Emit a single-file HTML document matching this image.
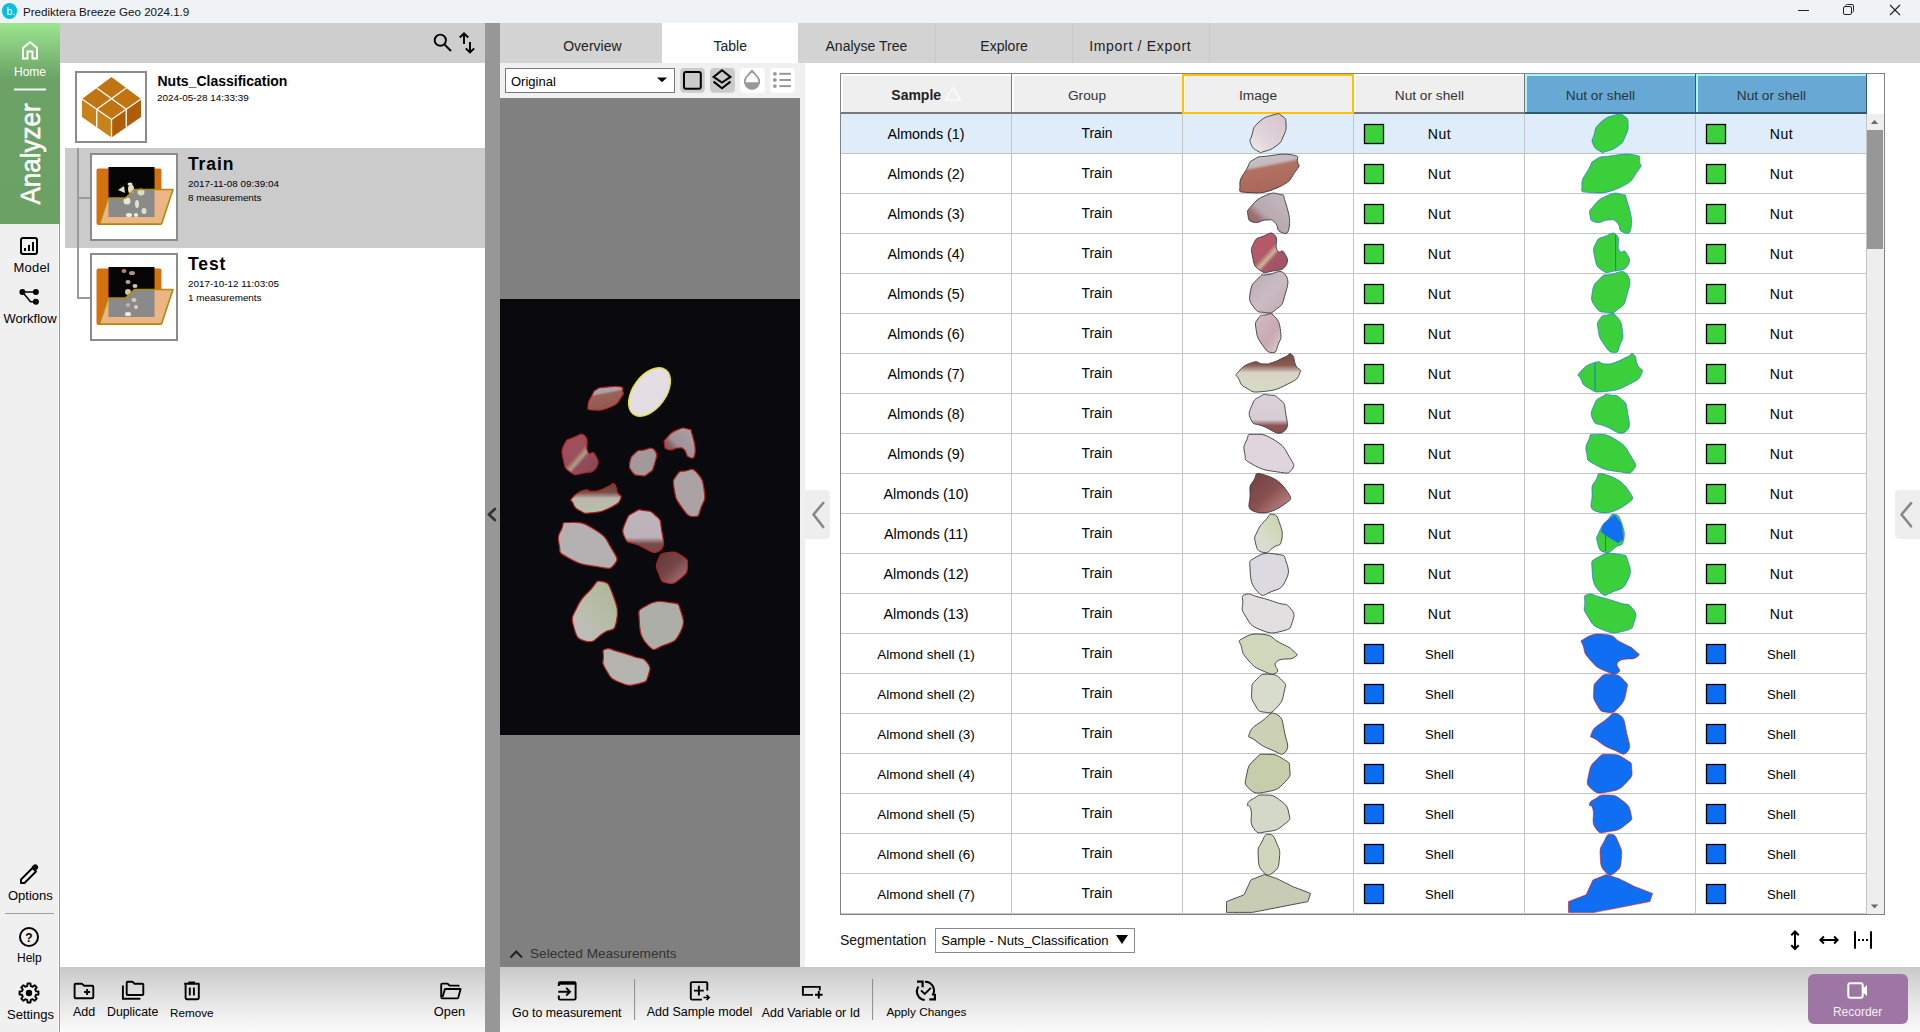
<!DOCTYPE html><html><head><meta charset="utf-8"><title>Prediktera Breeze Geo</title><style>*{margin:0;padding:0;box-sizing:border-box}
html,body{width:1920px;height:1032px;overflow:hidden;background:#fff;font-family:"Liberation Sans",sans-serif;color:#000;position:relative}
.abs{position:absolute}
.t{position:absolute;white-space:nowrap;line-height:1}
</style></head><body>
<div class="abs" style="left:0;top:0;width:1920px;height:23px;background:#eff3f6"></div>
<div class="abs" style="left:2px;top:3.2px;width:15.4px;height:15.4px;border-radius:50%;background:#06bedf"></div>
<div class="t" style="left:6.5px;top:5.5px;font-size:10.5px;color:#fff">b.</div>
<div class="t" style="left:23px;top:5.8px;font-size:11.6px;color:#111">Prediktera Breeze Geo 2024.1.9</div>
<svg class="abs" style="left:1790px;top:0" width="130" height="23">
 <line x1="8" y1="10.5" x2="19" y2="10.5" stroke="#222" stroke-width="1"/>
 <rect x="53.5" y="6.5" width="8" height="8" rx="1.5" fill="none" stroke="#222" stroke-width="1"/>
 <path d="M55.5 5.5 Q56 4.5 57.5 4.5 L62 4.5 Q63.5 4.5 63.5 6 L63.5 10.5 Q63.5 12 62.5 12.5" fill="none" stroke="#222" stroke-width="1"/>
 <line x1="100" y1="5" x2="110" y2="15" stroke="#222" stroke-width="1.1"/>
 <line x1="110" y1="5" x2="100" y2="15" stroke="#222" stroke-width="1.1"/>
</svg>

<div class="abs" style="left:0;top:23px;width:60px;height:1009px;background:#f0f0f0"></div>
<div class="abs" style="left:58px;top:224px;width:1px;height:808px;background:#fafafa"></div><div class="abs" style="left:59px;top:224px;width:1px;height:808px;background:#9a9a9a"></div>
<div class="abs" style="left:0;top:23px;width:60px;height:201px;background:linear-gradient(#9ce58f 0px,#6ca266 56px,#6ba165 201px)"></div>
<svg class="abs" style="left:0;top:23px" width="59" height="201">
 <path d="M23 35.5 L23 25 L30 19 L37 25 L37 35.5 L32.5 35.5 L32.5 28.5 L27.5 28.5 L27.5 35.5 Z" fill="none" stroke="#fff" stroke-width="2"/>
 <rect x="14" y="65.5" width="32" height="2" fill="#fff" opacity="0.95"/>
</svg>
<div class="t" style="left:14px;top:66px;font-size:12px;color:#fff">Home</div>
<div class="t" style="left:0;top:0;font-size:26px;color:#fff;-webkit-text-stroke:0.5px #fff;transform-origin:0 0;transform:translate(16.5px,204.5px) rotate(-90deg) scale(1,1.08)">Analyzer</div>
<svg class="abs" style="left:0;top:224px" width="59" height="120">
 <rect x="21" y="14" width="16" height="16" rx="2" fill="none" stroke="#000" stroke-width="2"/>
 <rect x="24" y="24" width="2" height="3" fill="#000"/>
 <rect x="28" y="21" width="2" height="6" fill="#000"/>
 <rect x="32" y="18" width="2" height="9" fill="#000"/>
 <path d="M22.5 68 L36 68 M22.5 68 L30.5 77.8 L36 77.8" fill="none" stroke="#000" stroke-width="1.5"/>
 <circle cx="22.4" cy="68" r="3" fill="#000"/>
 <circle cx="35.9" cy="68" r="3" fill="#000"/>
 <circle cx="35.9" cy="77.8" r="3" fill="#000"/>
</svg>
<div class="t" style="left:13.5px;top:261px;font-size:13px;letter-spacing:0.2px">Model</div>
<div class="t" style="left:3.5px;top:311.5px;font-size:13px">Workflow</div>
<svg class="abs" style="left:0;top:855px" width="59" height="177">
 <path d="M21 24.5 L32.5 13 L36 16.5 L24.5 28 L21 28 Z" fill="none" stroke="#000" stroke-width="1.9" stroke-linejoin="round"/><path d="M33 10.5 Q34.5 8.5 36.5 9.5 L38 11 Q39 13 37 14.5 L35.5 16 L31.5 12 Z" fill="#000"/>
 <line x1="5" y1="58.5" x2="54" y2="58.5" stroke="#a0a0a0" stroke-width="1"/>
 <circle cx="29" cy="82" r="9" fill="none" stroke="#000" stroke-width="2"/>
 <text x="29" y="86.5" font-size="12" font-family="Liberation Sans" font-weight="bold" text-anchor="middle">?</text>
</svg>
<div class="t" style="left:8px;top:889px;font-size:13px">Options</div>
<div class="t" style="left:17px;top:952px;font-size:12px">Help</div>
<svg class="abs" style="left:17px;top:981px" width="24" height="24" viewBox="0 0 24 24">
 <path d="M18.97,10.21 L21.48,10.50 L21.48,13.50 L18.97,13.79 L18.20,15.67 L19.77,17.64 L17.64,19.77 L15.67,18.20 L13.79,18.97 L13.50,21.48 L10.50,21.48 L10.21,18.97 L8.33,18.20 L6.36,19.77 L4.23,17.64 L5.80,15.67 L5.03,13.79 L2.52,13.50 L2.52,10.50 L5.03,10.21 L5.80,8.33 L4.23,6.36 L6.36,4.23 L8.33,5.80 L10.21,5.03 L10.50,2.52 L13.50,2.52 L13.79,5.03 L15.67,5.80 L17.64,4.23 L19.77,6.36 L18.20,8.33Z" fill="none" stroke="#000" stroke-width="1.9" stroke-linejoin="round"/>
 <circle cx="12" cy="12" r="3.2" fill="#000"/>
</svg>
<div class="t" style="left:7px;top:1008px;font-size:13px">Settings</div>

<div class="abs" style="left:60px;top:23px;width:425px;height:40px;background:#cecece;"></div>
<div class="abs" style="left:60px;top:63px;width:425px;height:904px;background:#fff;"></div>
<div class="abs" style="left:485px;top:23px;width:15px;height:1009px;background:#979797;"></div>
<svg class="abs" style="left:420px;top:23px" width="65" height="40">
<circle cx="20.3" cy="17.2" r="5.6" fill="none" stroke="#000" stroke-width="1.9"/>
<line x1="24.5" y1="21.5" x2="31" y2="28" stroke="#000" stroke-width="1.9"/>
<path d="M44 10.5 L44 21 M39.8 14.5 L44 10.3 L48.2 14.5" fill="none" stroke="#000" stroke-width="1.9"/>
<path d="M50 19 L50 29.5 M45.8 25.3 L50 29.5 L54.2 25.3" fill="none" stroke="#000" stroke-width="1.9"/>
</svg>
<div class="abs" style="left:75px;top:71px;width:72px;height:72px;background:#fff;border:2px solid #8b8b8b"></div>
<svg class="abs" style="left:0;top:0" width="160" height="150">
<polygon points="111.5,77 141,99 111.5,119.5 82,99" fill="#c07412"/>
<polygon points="82,99 111.5,119.5 111.5,137.5 82,117" fill="#c98119"/>
<polygon points="111.5,119.5 141,99 141,117 111.5,137.5" fill="#b05c09"/>
<g stroke="#fff" stroke-width="1.3" fill="none">
<line x1="96.75" y1="88" x2="126.25" y2="109.25"/>
<line x1="126.25" y1="88" x2="96.75" y2="109.25"/>
<line x1="96.75" y1="109.25" x2="96.75" y2="127.5"/>
<line x1="126.25" y1="109.25" x2="126.25" y2="127.5"/>
<line x1="111.5" y1="119.5" x2="111.5" y2="137.5"/>
<polyline points="82,99 111.5,119.5 141,99"/>
</g></svg>
<div class="t" style="left:157.5px;top:73.65px;font-size:14px;font-weight:bold;color:#000;">Nuts_Classification</div>
<div class="t" style="left:157px;top:93.42px;font-size:9.9px;font-weight:normal;color:#000;">2024-05-28 14:33:39</div>
<div class="abs" style="left:65px;top:148px;width:420px;height:100px;background:#cbcbcb;"></div>
<div class="abs" style="left:77px;top:148px;width:2px;height:150px;background:#9a9a9a;"></div>
<div class="abs" style="left:77px;top:197px;width:13px;height:2px;background:#9a9a9a;"></div>
<div class="abs" style="left:77px;top:297px;width:13px;height:2px;background:#9a9a9a;"></div>
<div class="abs" style="left:90px;top:153px;width:88px;height:88px;background:#fff;border:2px solid #8b8b8b"></div><svg class="abs" style="left:0;top:0px" width="200" height="350">
<rect x="96.5" y="168.5" width="65" height="56.5" rx="2" fill="#d4700e"/>
<rect x="108.5" y="167" width="46" height="50" fill="#050505"/>
<polygon points="99.5,224 108,198 125.5,198 134.5,189.5 173,189.5 161.5,224" fill="#ebb584"/>
<polygon points="108.5,198 125.5,198 134.5,189.5 154.5,189.5 154.5,217 108.5,217" fill="#8a8a8a"/>
<ellipse cx="130" cy="184" rx="2.5" ry="1.5" fill="#e8e8d0"/>
<polygon points="118,190 124,186 125,193" fill="#e0e0c8"/>
<ellipse cx="131" cy="189" rx="3" ry="4.5" fill="#dcdcc0"/>
<ellipse cx="141" cy="192" rx="3.5" ry="3.5" fill="#dcdcc0"/>
<ellipse cx="127" cy="201" rx="3.5" ry="3.5" fill="#e8e8d8"/>
<ellipse cx="137" cy="204" rx="2" ry="4" fill="#e0e0c8"/>
<ellipse cx="144" cy="211" rx="2.5" ry="3" fill="#e0e0c8"/>
<ellipse cx="129" cy="215" rx="3" ry="2" fill="#f0f0e0"/>
<ellipse cx="136" cy="215" rx="2" ry="2" fill="#f0f0e0"/>
<polygon points="99.5,224 108,198 125.5,198 134.5,189.5 173,189.5 161.5,224" fill="none" stroke="#b08a0c" stroke-width="1.6" stroke-linejoin="round"/>
</svg>
<div class="abs" style="left:90px;top:253px;width:88px;height:88px;background:#fff;border:2px solid #8b8b8b"></div><svg class="abs" style="left:0;top:0px" width="200" height="350">
<rect x="96.5" y="268.5" width="65" height="56.5" rx="2" fill="#d4700e"/>
<rect x="108.5" y="267" width="46" height="50" fill="#050505"/>
<polygon points="99.5,324 108,298 125.5,298 134.5,289.5 173,289.5 161.5,324" fill="#ebb584"/>
<polygon points="108.5,298 125.5,298 134.5,289.5 154.5,289.5 154.5,317 108.5,317" fill="#8a8a8a"/>
<ellipse cx="124" cy="271" rx="2.5" ry="2" fill="#b08070"/>
<ellipse cx="132" cy="273" rx="3" ry="2" fill="#c09080"/>
<ellipse cx="128" cy="282" rx="2.5" ry="2" fill="#c0a090"/>
<ellipse cx="135" cy="286" rx="2.5" ry="2" fill="#c8c8a8"/>
<ellipse cx="128" cy="292" rx="3" ry="3" fill="#c8c8a8"/>
<ellipse cx="134" cy="300" rx="2.5" ry="2" fill="#d8c8c0"/>
<ellipse cx="128" cy="305" rx="2" ry="2" fill="#d0b0b0"/>
<ellipse cx="136" cy="307" rx="2" ry="2" fill="#e0d0c8"/>
<ellipse cx="128" cy="314" rx="3" ry="2" fill="#f0f0e8"/>
<polygon points="99.5,324 108,298 125.5,298 134.5,289.5 173,289.5 161.5,324" fill="none" stroke="#b08a0c" stroke-width="1.6" stroke-linejoin="round"/>
</svg>
<div class="t" style="left:188px;top:155.69px;font-size:17.5px;font-weight:bold;color:#000;letter-spacing:0.9px">Train</div>
<div class="t" style="left:188px;top:178.62px;font-size:9.9px;font-weight:normal;color:#000;">2017-11-08 09:39:04</div>
<div class="t" style="left:188px;top:192.62px;font-size:9.9px;font-weight:normal;color:#000;">8 measurements</div>
<div class="t" style="left:188px;top:255.69px;font-size:17.5px;font-weight:bold;color:#000;letter-spacing:0.9px">Test</div>
<div class="t" style="left:188px;top:278.62px;font-size:9.9px;font-weight:normal;color:#000;">2017-10-12 11:03:05</div>
<div class="t" style="left:188px;top:292.62px;font-size:9.9px;font-weight:normal;color:#000;">1 measurements</div>
<div class="abs" style="left:500px;top:23px;width:1420px;height:40px;background:#d3d3d3;"></div>
<div class="abs" style="left:662px;top:23px;width:136px;height:40px;background:#fff;"></div>
<div class="abs" style="left:935px;top:23px;width:1px;height:40px;background:#c9c9c9;"></div>
<div class="abs" style="left:1072px;top:23px;width:1px;height:40px;background:#c9c9c9;"></div>
<div class="abs" style="left:1209px;top:23px;width:1px;height:40px;background:#c9c9c9;"></div>
<div class="t" style="left:392.4px;width:400px;text-align:center;top:39.35px;font-size:14px;font-weight:normal;color:#222;">Overview</div>
<div class="t" style="left:530.2px;width:400px;text-align:center;top:39.35px;font-size:14px;font-weight:normal;color:#222;">Table</div>
<div class="t" style="left:666.4px;width:400px;text-align:center;top:39.35px;font-size:14px;font-weight:normal;color:#222;">Analyse Tree</div>
<div class="t" style="left:804.1px;width:400px;text-align:center;top:39.35px;font-size:14px;font-weight:normal;color:#222;">Explore</div>
<div class="t" style="left:940.3px;width:400px;text-align:center;top:39.35px;font-size:14px;font-weight:normal;color:#222;letter-spacing:0.7px">Import / Export</div>
<div class="abs" style="left:500px;top:63px;width:305px;height:35px;background:#f0f0f0;"></div>
<div class="abs" style="left:800px;top:98px;width:5px;height:869px;background:#f0f0f0;"></div>
<div class="abs" style="left:500px;top:98px;width:300px;height:869px;background:#808080;"></div>
<div class="abs" style="left:505px;top:68px;width:170px;height:25px;background:#fff;border:1px solid #7a7a7a"></div>
<div class="t" style="left:511px;top:74.70px;font-size:13px;font-weight:normal;color:#000;">Original</div>
<svg class="abs" style="left:650px;top:70px" width="25" height="20"><polygon points="7,7.4 17,7.4 12,12.2" fill="#000"/></svg>
<svg class="abs" style="left:675px;top:63px" width="130" height="36">
<rect x="5.3" y="5.1" width="24.5" height="24.7" rx="4" fill="#cacaca"/>
<rect x="9" y="9" width="16.8" height="16.8" rx="2" fill="none" stroke="#000" stroke-width="2"/>
<rect x="35" y="5.1" width="24.9" height="24.7" rx="4" fill="#cacaca"/>
<polygon points="47,7.3 55.5,13.9 47,19.6 38.6,13.9" fill="none" stroke="#000" stroke-width="2" stroke-linejoin="miter"/>
<polyline points="38.6,18.6 47,25.3 55.5,18.6" fill="none" stroke="#000" stroke-width="2"/>
<rect x="65" y="5.1" width="24.7" height="24.7" rx="4" fill="#fff"/>
<path d="M77 7.6 L71 14.5 A7.2 7.2 0 1 0 83 14.5 Z" fill="none" stroke="#999" stroke-width="1.8" stroke-linejoin="round"/>
<path d="M69.6 19.3 L84.4 19.3 A7.4 7.4 0 0 1 69.6 19.3 Z" fill="#999"/>
<rect x="95.1" y="5.1" width="24.7" height="24.7" rx="4" fill="#fff"/>
<g fill="#999"><circle cx="99.9" cy="10.8" r="1.9"/><circle cx="99.9" cy="17" r="1.9"/><circle cx="99.9" cy="23.1" r="1.9"/></g>
<g stroke="#999" stroke-width="2"><line x1="104.3" y1="10.8" x2="115.9" y2="10.8"/><line x1="104.3" y1="17" x2="115.9" y2="17"/><line x1="104.3" y1="23.1" x2="115.9" y2="23.1"/></g>
</svg>
<div class="abs" style="left:500px;top:299px;width:299.5px;height:436px;background:#09090e;"></div>
<svg class="abs" style="left:0;top:0" width="800" height="740"><ellipse cx="649.5" cy="392" rx="16.5" ry="27.5" transform="rotate(36 649.5 392)" fill="#e4dde3" stroke="#e6e41e" stroke-width="1.2"/><path d="M596.3,389.6 C600.1,387.2 597.8,388.2 604.8,387.4 C611.7,386.5 614.1,385.6 619.4,386.7 C624.8,387.8 622.0,388.0 622.6,391.0 C623.2,394.0 625.0,392.0 621.5,396.7 C618.0,401.5 619.6,402.9 611.0,406.8 C602.4,410.8 599.8,410.4 592.9,410.0 C586.0,409.6 588.2,409.8 588.0,405.4 C587.8,401.0 589.6,400.1 592.1,395.3 C594.6,390.6 592.6,391.9 596.3,389.6Z" fill="url(#ig1)" fill-opacity="0.86" stroke="#b02020" stroke-width="1.2"/><path d="M687.7,429.0 C692.1,430.3 689.9,426.9 692.0,434.2 C694.2,441.5 696.0,446.4 695.0,453.2 C694.0,460.1 691.9,458.0 688.6,457.0 C685.4,456.0 687.4,452.4 684.3,449.7 C681.2,447.0 682.9,448.0 678.3,448.0 C673.6,448.0 672.9,450.8 668.8,449.7 C664.7,448.7 665.0,448.2 664.5,444.5 C664.0,440.9 663.2,442.0 667.1,437.6 C671.0,433.2 671.2,432.5 677.4,429.9 C683.6,427.3 683.3,427.7 687.7,429.0Z" fill="url(#ig2)" fill-opacity="0.86" stroke="#b02020" stroke-width="1.2"/><path d="M585.3,436.3 C589.5,440.6 584.9,446.4 587.7,451.8 C590.5,457.1 591.9,449.5 594.6,454.1 C597.2,458.8 600.0,461.5 596.5,467.3 C593.0,473.0 590.9,471.8 583.0,473.2 C575.0,474.6 576.0,476.3 570.1,472.1 C564.2,467.8 564.9,467.2 563.2,459.0 C561.5,450.7 561.2,451.0 564.3,444.6 C567.4,438.2 567.3,440.0 573.6,437.5 C579.9,435.0 581.1,432.0 585.3,436.3Z" fill="url(#ig3)" fill-opacity="0.86" stroke="#b02020" stroke-width="1.2"/><path d="M654.7,450.3 C658.3,454.7 656.2,458.1 654.2,465.1 C652.2,472.0 652.2,470.4 648.1,473.6 C644.0,476.8 645.3,476.1 640.6,475.6 C635.9,475.1 635.6,476.1 632.4,472.1 C629.2,468.0 628.9,467.8 629.9,462.0 C630.9,456.2 632.0,456.1 635.7,452.6 C639.5,449.1 636.6,451.0 642.3,450.3 C648.0,449.6 651.1,445.9 654.7,450.3Z" fill="#bdb1b2" fill-opacity="0.86" stroke="#b02020" stroke-width="1.2"/><path d="M685.6,470.9 C691.7,470.1 691.4,466.7 697.0,472.8 C702.6,479.0 703.0,481.0 704.3,491.2 C705.6,501.4 704.4,499.2 701.3,506.8 C698.3,514.5 700.2,516.7 694.2,516.7 C688.2,516.7 687.4,515.3 681.4,506.8 C675.3,498.4 675.6,497.8 674.1,488.4 C672.6,479.1 673.0,480.9 676.4,475.7 C679.9,470.4 679.4,471.7 685.6,470.9Z" fill="#c6bbbc" fill-opacity="0.86" stroke="#b02020" stroke-width="1.2"/><path d="M572.5,497.7 C575.7,493.9 577.7,492.2 583.5,490.4 C589.4,488.5 587.2,491.4 592.0,491.4 C596.7,491.4 594.3,491.9 599.4,490.4 C604.5,488.8 604.5,488.1 608.9,486.2 C613.4,484.3 611.7,482.2 614.3,484.1 C616.8,486.0 615.6,488.1 617.5,492.5 C619.4,496.8 622.5,494.3 620.6,498.7 C618.7,503.1 619.6,502.9 611.1,507.2 C602.5,511.4 601.5,511.8 592.0,512.8 C582.4,513.8 585.0,513.3 579.2,510.3 C573.5,507.4 574.9,506.8 572.9,503.0 C570.9,499.2 569.3,501.5 572.5,497.7Z" fill="url(#ig6)" fill-opacity="0.86" stroke="#b02020" stroke-width="1.2"/><path d="M643.4,510.5 C649.5,511.4 649.6,509.6 655.0,515.0 C660.4,520.3 660.1,517.6 661.4,528.4 C662.7,539.1 666.5,545.8 659.4,550.7 C652.2,555.6 648.0,548.7 637.6,544.7 C627.2,540.7 628.1,544.5 624.6,537.3 C621.1,530.2 623.1,528.5 626.1,520.9 C629.1,513.3 629.5,515.2 634.7,512.0 C639.9,508.9 637.3,509.6 643.4,510.5Z" fill="url(#ig7)" fill-opacity="0.86" stroke="#b02020" stroke-width="1.2"/><path d="M569.7,522.5 C579.3,522.5 581.3,521.2 593.7,528.9 C606.2,536.6 605.1,537.5 611.3,548.1 C617.5,558.7 618.8,558.7 614.5,564.2 C610.2,569.8 610.8,568.7 596.9,566.7 C583.0,564.8 579.5,564.2 568.2,557.7 C556.8,551.2 561.1,553.6 559.2,545.0 C557.3,536.3 558.5,535.6 561.7,528.9 C564.8,522.1 560.1,522.5 569.7,522.5Z" fill="#d2cdcd" fill-opacity="0.86" stroke="#b02020" stroke-width="1.2"/><path d="M668.0,552.5 C675.2,551.3 676.1,552.0 682.0,556.0 C687.9,560.0 687.8,559.4 687.5,566.0 C687.2,572.6 687.1,572.9 681.0,578.0 C674.9,583.1 673.6,584.2 667.0,583.0 C660.4,581.8 661.7,580.9 659.0,574.0 C656.3,567.1 655.3,566.5 658.0,560.0 C660.7,553.5 660.8,553.7 668.0,552.5Z" fill="url(#ig9)" fill-opacity="0.86" stroke="#b02020" stroke-width="1.2"/><path d="M601.6,581.4 C608.3,582.7 608.3,582.1 612.7,594.3 C617.1,606.5 619.0,610.5 616.3,622.1 C613.6,633.6 612.9,627.0 603.9,632.8 C594.8,638.6 595.1,643.2 586.0,641.3 C577.0,639.4 576.3,636.6 573.6,626.3 C570.9,616.1 572.1,618.0 577.2,607.1 C582.3,596.2 583.1,597.6 590.5,589.9 C597.8,582.2 594.9,580.1 601.6,581.4Z" fill="url(#ig10)" fill-opacity="0.86" stroke="#b02020" stroke-width="1.2"/><path d="M669.9,602.6 C680.2,604.3 677.8,602.2 680.8,611.3 C683.8,620.4 685.1,622.8 679.9,633.0 C674.7,643.2 673.1,641.6 663.6,645.3 C654.0,649.0 655.3,652.7 648.0,645.3 C640.8,637.9 639.8,632.4 639.3,620.5 C638.8,608.6 637.3,611.1 646.4,605.7 C655.6,600.3 659.6,600.9 669.9,602.6Z" fill="#cacac2" fill-opacity="0.86" stroke="#b02020" stroke-width="1.2"/><path d="M605.9,649.0 C610.3,647.5 609.6,649.3 618.1,651.6 C626.6,653.8 625.7,653.6 634.2,656.7 C642.7,659.7 642.2,656.4 646.5,661.8 C650.8,667.2 650.7,668.1 648.5,674.6 C646.3,681.2 647.9,681.3 639.1,683.6 C630.4,685.9 629.4,686.5 619.4,682.3 C609.4,678.1 610.7,677.2 605.9,669.5 C601.1,661.8 603.4,662.8 603.4,656.7 C603.4,650.5 601.4,650.5 605.9,649.0Z" fill="#d2d1c9" fill-opacity="0.86" stroke="#b02020" stroke-width="1.2"/></svg>
<svg class="abs" style="left:505px;top:945px" width="25" height="16"><polyline points="5.5,12.5 11.2,6.5 17,12.5" fill="none" stroke="#222" stroke-width="2"/></svg>
<div class="t" style="left:530px;top:946.79px;font-size:13.6px;font-weight:normal;color:#333;">Selected Measurements</div>
<div class="abs" style="left:805px;top:490px;width:25px;height:49px;background:#eeeeee;border-radius:0 4px 4px 0"></div>
<svg class="abs" style="left:805px;top:490px" width="25" height="49"><polyline points="18.2,13 8.5,24.5 18.2,37" fill="none" stroke="#888" stroke-width="2.6" stroke-linecap="round" stroke-linejoin="round"/></svg>
<div class="abs" style="left:1895px;top:490px;width:25px;height:49px;background:#eeeeee;border-radius:4px 0 0 4px"></div>
<svg class="abs" style="left:1895px;top:490px" width="25" height="49"><polyline points="16.1,13.2 6.5,24.5 16.1,36.3" fill="none" stroke="#888" stroke-width="2.6" stroke-linecap="round" stroke-linejoin="round"/></svg>
<svg class="abs" style="left:485px;top:500px" width="15" height="30"><polyline points="9.9,9 3.9,14.5 9.9,20" fill="none" stroke="#333" stroke-width="2.6" stroke-linecap="round" stroke-linejoin="round"/></svg>
<div class="abs" style="left:840px;top:73px;width:1045px;height:842px;background:#fff;border:1px solid #7d8490"></div>
<div class="abs" style="left:841px;top:114px;width:1025px;height:39px;background:#dfecf9;"></div>
<div class="abs" style="left:841px;top:153px;width:1025px;height:1px;background:#c4c4c4;"></div>
<div class="abs" style="left:841px;top:154px;width:1025px;height:39px;background:#fff;"></div>
<div class="abs" style="left:841px;top:193px;width:1025px;height:1px;background:#c4c4c4;"></div>
<div class="abs" style="left:841px;top:194px;width:1025px;height:39px;background:#fff;"></div>
<div class="abs" style="left:841px;top:233px;width:1025px;height:1px;background:#c4c4c4;"></div>
<div class="abs" style="left:841px;top:234px;width:1025px;height:39px;background:#fff;"></div>
<div class="abs" style="left:841px;top:273px;width:1025px;height:1px;background:#c4c4c4;"></div>
<div class="abs" style="left:841px;top:274px;width:1025px;height:39px;background:#fff;"></div>
<div class="abs" style="left:841px;top:313px;width:1025px;height:1px;background:#c4c4c4;"></div>
<div class="abs" style="left:841px;top:314px;width:1025px;height:39px;background:#fff;"></div>
<div class="abs" style="left:841px;top:353px;width:1025px;height:1px;background:#c4c4c4;"></div>
<div class="abs" style="left:841px;top:354px;width:1025px;height:39px;background:#fff;"></div>
<div class="abs" style="left:841px;top:393px;width:1025px;height:1px;background:#c4c4c4;"></div>
<div class="abs" style="left:841px;top:394px;width:1025px;height:39px;background:#fff;"></div>
<div class="abs" style="left:841px;top:433px;width:1025px;height:1px;background:#c4c4c4;"></div>
<div class="abs" style="left:841px;top:434px;width:1025px;height:39px;background:#fff;"></div>
<div class="abs" style="left:841px;top:473px;width:1025px;height:1px;background:#c4c4c4;"></div>
<div class="abs" style="left:841px;top:474px;width:1025px;height:39px;background:#fff;"></div>
<div class="abs" style="left:841px;top:513px;width:1025px;height:1px;background:#c4c4c4;"></div>
<div class="abs" style="left:841px;top:514px;width:1025px;height:39px;background:#fff;"></div>
<div class="abs" style="left:841px;top:553px;width:1025px;height:1px;background:#c4c4c4;"></div>
<div class="abs" style="left:841px;top:554px;width:1025px;height:39px;background:#fff;"></div>
<div class="abs" style="left:841px;top:593px;width:1025px;height:1px;background:#c4c4c4;"></div>
<div class="abs" style="left:841px;top:594px;width:1025px;height:39px;background:#fff;"></div>
<div class="abs" style="left:841px;top:633px;width:1025px;height:1px;background:#c4c4c4;"></div>
<div class="abs" style="left:841px;top:634px;width:1025px;height:39px;background:#fff;"></div>
<div class="abs" style="left:841px;top:673px;width:1025px;height:1px;background:#c4c4c4;"></div>
<div class="abs" style="left:841px;top:674px;width:1025px;height:39px;background:#fff;"></div>
<div class="abs" style="left:841px;top:713px;width:1025px;height:1px;background:#c4c4c4;"></div>
<div class="abs" style="left:841px;top:714px;width:1025px;height:39px;background:#fff;"></div>
<div class="abs" style="left:841px;top:753px;width:1025px;height:1px;background:#c4c4c4;"></div>
<div class="abs" style="left:841px;top:754px;width:1025px;height:39px;background:#fff;"></div>
<div class="abs" style="left:841px;top:793px;width:1025px;height:1px;background:#c4c4c4;"></div>
<div class="abs" style="left:841px;top:794px;width:1025px;height:39px;background:#fff;"></div>
<div class="abs" style="left:841px;top:833px;width:1025px;height:1px;background:#c4c4c4;"></div>
<div class="abs" style="left:841px;top:834px;width:1025px;height:39px;background:#fff;"></div>
<div class="abs" style="left:841px;top:873px;width:1025px;height:1px;background:#c4c4c4;"></div>
<div class="abs" style="left:841px;top:874px;width:1025px;height:39px;background:#fff;"></div>
<div class="abs" style="left:841px;top:913px;width:1025px;height:1px;background:#c4c4c4;"></div>
<div class="abs" style="left:1011px;top:114px;width:1px;height:800px;background:#c4c4c4;"></div>
<div class="abs" style="left:1182px;top:114px;width:1px;height:800px;background:#c4c4c4;"></div>
<div class="abs" style="left:1353px;top:114px;width:1px;height:800px;background:#c4c4c4;"></div>
<div class="abs" style="left:1524px;top:114px;width:1px;height:800px;background:#c4c4c4;"></div>
<div class="abs" style="left:1695px;top:114px;width:1px;height:800px;background:#c4c4c4;"></div>
<div class="abs" style="left:1866px;top:114px;width:1px;height:800px;background:#c4c4c4;"></div>
<div class="abs" style="left:841px;top:74px;width:171px;height:40px;background:#efefef;"></div><div class="abs" style="left:841px;top:74px;width:171px;height:2px;background:#fff;"></div><div class="abs" style="left:841px;top:74px;width:2px;height:38px;background:#fff;"></div><div class="abs" style="left:841px;top:112px;width:171px;height:2px;background:#787878;"></div><div class="abs" style="left:1011px;top:74px;width:1px;height:40px;background:#787878;"></div>
<div class="abs" style="left:1012px;top:74px;width:171px;height:40px;background:#efefef;"></div><div class="abs" style="left:1012px;top:74px;width:171px;height:2px;background:#fff;"></div><div class="abs" style="left:1012px;top:74px;width:2px;height:38px;background:#fff;"></div><div class="abs" style="left:1012px;top:112px;width:171px;height:2px;background:#787878;"></div><div class="abs" style="left:1182px;top:74px;width:1px;height:40px;background:#787878;"></div>
<div class="abs" style="left:1183px;top:74px;width:171px;height:40px;background:#efefef;"></div><div class="abs" style="left:1183px;top:74px;width:171px;height:2px;background:#fff;"></div><div class="abs" style="left:1183px;top:74px;width:2px;height:38px;background:#fff;"></div><div class="abs" style="left:1183px;top:112px;width:171px;height:2px;background:#787878;"></div><div class="abs" style="left:1353px;top:74px;width:1px;height:40px;background:#787878;"></div>
<div class="abs" style="left:1354px;top:74px;width:171px;height:40px;background:#efefef;"></div><div class="abs" style="left:1354px;top:74px;width:171px;height:2px;background:#fff;"></div><div class="abs" style="left:1354px;top:74px;width:2px;height:38px;background:#fff;"></div><div class="abs" style="left:1354px;top:112px;width:171px;height:2px;background:#787878;"></div><div class="abs" style="left:1524px;top:74px;width:1px;height:40px;background:#787878;"></div>
<div class="abs" style="left:1525px;top:74px;width:171px;height:40px;background:#67a9d4;"></div><div class="abs" style="left:1525px;top:74px;width:171px;height:2px;background:#aaf6fb;"></div><div class="abs" style="left:1525px;top:74px;width:2px;height:38px;background:#aaf6fb;"></div><div class="abs" style="left:1525px;top:112px;width:171px;height:2px;background:#2e5870;"></div><div class="abs" style="left:1695px;top:74px;width:1px;height:40px;background:#2e5870;"></div>
<div class="abs" style="left:1696px;top:74px;width:171px;height:40px;background:#67a9d4;"></div><div class="abs" style="left:1696px;top:74px;width:171px;height:2px;background:#aaf6fb;"></div><div class="abs" style="left:1696px;top:74px;width:2px;height:38px;background:#aaf6fb;"></div><div class="abs" style="left:1696px;top:112px;width:171px;height:2px;background:#2e5870;"></div><div class="abs" style="left:1866px;top:74px;width:1px;height:40px;background:#2e5870;"></div>
<div class="abs" style="left:1182px;top:74px;width:172px;height:40px;background:transparent;border:2px solid #ffc200"></div>
<div class="abs" style="left:1867px;top:74px;width:17px;height:40px;background:#fff;"></div>
<div class="t" style="left:891.3px;top:88.45px;font-size:14px;font-weight:bold;color:#222;">Sample</div>
<svg class="abs" style="left:944px;top:86px" width="20" height="16"><polygon points="1.5,14 9,1.5 16.5,14" fill="none" stroke="#fff" stroke-width="1.2"/></svg>
<div class="t" style="left:887px;width:400px;text-align:center;top:88.70px;font-size:13.7px;font-weight:normal;color:#333;">Group</div>
<div class="t" style="left:1058px;width:400px;text-align:center;top:88.70px;font-size:13.7px;font-weight:normal;color:#333;">Image</div>
<div class="t" style="left:1229.4px;width:400px;text-align:center;top:88.70px;font-size:13.7px;font-weight:normal;color:#333;">Nut or shell</div>
<div class="t" style="left:1400.4px;width:400px;text-align:center;top:88.70px;font-size:13.7px;font-weight:normal;color:#2a3440;">Nut or shell</div>
<div class="t" style="left:1571.4px;width:400px;text-align:center;top:88.70px;font-size:13.7px;font-weight:normal;color:#2a3440;">Nut or shell</div>
<div class="t" style="left:726px;width:400px;text-align:center;top:126.90px;font-size:14.3px;font-weight:normal;color:#000;">Almonds (1)</div>
<div class="t" style="left:897px;width:400px;text-align:center;top:127.32px;font-size:13.8px;font-weight:normal;color:#000;">Train</div>
<div class="t" style="left:1239.5px;width:400px;text-align:center;top:127.15px;font-size:14px;font-weight:normal;color:#000;letter-spacing:0.6px">Nut</div>
<div class="t" style="left:1581.5px;width:400px;text-align:center;top:127.15px;font-size:14px;font-weight:normal;color:#000;letter-spacing:0.6px">Nut</div>
<div class="t" style="left:726px;width:400px;text-align:center;top:166.90px;font-size:14.3px;font-weight:normal;color:#000;">Almonds (2)</div>
<div class="t" style="left:897px;width:400px;text-align:center;top:167.32px;font-size:13.8px;font-weight:normal;color:#000;">Train</div>
<div class="t" style="left:1239.5px;width:400px;text-align:center;top:167.15px;font-size:14px;font-weight:normal;color:#000;letter-spacing:0.6px">Nut</div>
<div class="t" style="left:1581.5px;width:400px;text-align:center;top:167.15px;font-size:14px;font-weight:normal;color:#000;letter-spacing:0.6px">Nut</div>
<div class="t" style="left:726px;width:400px;text-align:center;top:206.90px;font-size:14.3px;font-weight:normal;color:#000;">Almonds (3)</div>
<div class="t" style="left:897px;width:400px;text-align:center;top:207.32px;font-size:13.8px;font-weight:normal;color:#000;">Train</div>
<div class="t" style="left:1239.5px;width:400px;text-align:center;top:207.15px;font-size:14px;font-weight:normal;color:#000;letter-spacing:0.6px">Nut</div>
<div class="t" style="left:1581.5px;width:400px;text-align:center;top:207.15px;font-size:14px;font-weight:normal;color:#000;letter-spacing:0.6px">Nut</div>
<div class="t" style="left:726px;width:400px;text-align:center;top:246.90px;font-size:14.3px;font-weight:normal;color:#000;">Almonds (4)</div>
<div class="t" style="left:897px;width:400px;text-align:center;top:247.32px;font-size:13.8px;font-weight:normal;color:#000;">Train</div>
<div class="t" style="left:1239.5px;width:400px;text-align:center;top:247.15px;font-size:14px;font-weight:normal;color:#000;letter-spacing:0.6px">Nut</div>
<div class="t" style="left:1581.5px;width:400px;text-align:center;top:247.15px;font-size:14px;font-weight:normal;color:#000;letter-spacing:0.6px">Nut</div>
<div class="t" style="left:726px;width:400px;text-align:center;top:286.90px;font-size:14.3px;font-weight:normal;color:#000;">Almonds (5)</div>
<div class="t" style="left:897px;width:400px;text-align:center;top:287.32px;font-size:13.8px;font-weight:normal;color:#000;">Train</div>
<div class="t" style="left:1239.5px;width:400px;text-align:center;top:287.15px;font-size:14px;font-weight:normal;color:#000;letter-spacing:0.6px">Nut</div>
<div class="t" style="left:1581.5px;width:400px;text-align:center;top:287.15px;font-size:14px;font-weight:normal;color:#000;letter-spacing:0.6px">Nut</div>
<div class="t" style="left:726px;width:400px;text-align:center;top:326.90px;font-size:14.3px;font-weight:normal;color:#000;">Almonds (6)</div>
<div class="t" style="left:897px;width:400px;text-align:center;top:327.32px;font-size:13.8px;font-weight:normal;color:#000;">Train</div>
<div class="t" style="left:1239.5px;width:400px;text-align:center;top:327.15px;font-size:14px;font-weight:normal;color:#000;letter-spacing:0.6px">Nut</div>
<div class="t" style="left:1581.5px;width:400px;text-align:center;top:327.15px;font-size:14px;font-weight:normal;color:#000;letter-spacing:0.6px">Nut</div>
<div class="t" style="left:726px;width:400px;text-align:center;top:366.90px;font-size:14.3px;font-weight:normal;color:#000;">Almonds (7)</div>
<div class="t" style="left:897px;width:400px;text-align:center;top:367.32px;font-size:13.8px;font-weight:normal;color:#000;">Train</div>
<div class="t" style="left:1239.5px;width:400px;text-align:center;top:367.15px;font-size:14px;font-weight:normal;color:#000;letter-spacing:0.6px">Nut</div>
<div class="t" style="left:1581.5px;width:400px;text-align:center;top:367.15px;font-size:14px;font-weight:normal;color:#000;letter-spacing:0.6px">Nut</div>
<div class="t" style="left:726px;width:400px;text-align:center;top:406.90px;font-size:14.3px;font-weight:normal;color:#000;">Almonds (8)</div>
<div class="t" style="left:897px;width:400px;text-align:center;top:407.32px;font-size:13.8px;font-weight:normal;color:#000;">Train</div>
<div class="t" style="left:1239.5px;width:400px;text-align:center;top:407.15px;font-size:14px;font-weight:normal;color:#000;letter-spacing:0.6px">Nut</div>
<div class="t" style="left:1581.5px;width:400px;text-align:center;top:407.15px;font-size:14px;font-weight:normal;color:#000;letter-spacing:0.6px">Nut</div>
<div class="t" style="left:726px;width:400px;text-align:center;top:446.90px;font-size:14.3px;font-weight:normal;color:#000;">Almonds (9)</div>
<div class="t" style="left:897px;width:400px;text-align:center;top:447.32px;font-size:13.8px;font-weight:normal;color:#000;">Train</div>
<div class="t" style="left:1239.5px;width:400px;text-align:center;top:447.15px;font-size:14px;font-weight:normal;color:#000;letter-spacing:0.6px">Nut</div>
<div class="t" style="left:1581.5px;width:400px;text-align:center;top:447.15px;font-size:14px;font-weight:normal;color:#000;letter-spacing:0.6px">Nut</div>
<div class="t" style="left:726px;width:400px;text-align:center;top:486.90px;font-size:14.3px;font-weight:normal;color:#000;">Almonds (10)</div>
<div class="t" style="left:897px;width:400px;text-align:center;top:487.32px;font-size:13.8px;font-weight:normal;color:#000;">Train</div>
<div class="t" style="left:1239.5px;width:400px;text-align:center;top:487.15px;font-size:14px;font-weight:normal;color:#000;letter-spacing:0.6px">Nut</div>
<div class="t" style="left:1581.5px;width:400px;text-align:center;top:487.15px;font-size:14px;font-weight:normal;color:#000;letter-spacing:0.6px">Nut</div>
<div class="t" style="left:726px;width:400px;text-align:center;top:526.90px;font-size:14.3px;font-weight:normal;color:#000;">Almonds (11)</div>
<div class="t" style="left:897px;width:400px;text-align:center;top:527.32px;font-size:13.8px;font-weight:normal;color:#000;">Train</div>
<div class="t" style="left:1239.5px;width:400px;text-align:center;top:527.15px;font-size:14px;font-weight:normal;color:#000;letter-spacing:0.6px">Nut</div>
<div class="t" style="left:1581.5px;width:400px;text-align:center;top:527.15px;font-size:14px;font-weight:normal;color:#000;letter-spacing:0.6px">Nut</div>
<div class="t" style="left:726px;width:400px;text-align:center;top:566.90px;font-size:14.3px;font-weight:normal;color:#000;">Almonds (12)</div>
<div class="t" style="left:897px;width:400px;text-align:center;top:567.32px;font-size:13.8px;font-weight:normal;color:#000;">Train</div>
<div class="t" style="left:1239.5px;width:400px;text-align:center;top:567.15px;font-size:14px;font-weight:normal;color:#000;letter-spacing:0.6px">Nut</div>
<div class="t" style="left:1581.5px;width:400px;text-align:center;top:567.15px;font-size:14px;font-weight:normal;color:#000;letter-spacing:0.6px">Nut</div>
<div class="t" style="left:726px;width:400px;text-align:center;top:606.90px;font-size:14.3px;font-weight:normal;color:#000;">Almonds (13)</div>
<div class="t" style="left:897px;width:400px;text-align:center;top:607.32px;font-size:13.8px;font-weight:normal;color:#000;">Train</div>
<div class="t" style="left:1239.5px;width:400px;text-align:center;top:607.15px;font-size:14px;font-weight:normal;color:#000;letter-spacing:0.6px">Nut</div>
<div class="t" style="left:1581.5px;width:400px;text-align:center;top:607.15px;font-size:14px;font-weight:normal;color:#000;letter-spacing:0.6px">Nut</div>
<div class="t" style="left:726px;width:400px;text-align:center;top:647.57px;font-size:13.5px;font-weight:normal;color:#000;">Almond shell (1)</div>
<div class="t" style="left:897px;width:400px;text-align:center;top:647.32px;font-size:13.8px;font-weight:normal;color:#000;">Train</div>
<div class="t" style="left:1239.5px;width:400px;text-align:center;top:648.00px;font-size:13px;font-weight:normal;color:#000;">Shell</div>
<div class="t" style="left:1581.5px;width:400px;text-align:center;top:648.00px;font-size:13px;font-weight:normal;color:#000;">Shell</div>
<div class="t" style="left:726px;width:400px;text-align:center;top:687.57px;font-size:13.5px;font-weight:normal;color:#000;">Almond shell (2)</div>
<div class="t" style="left:897px;width:400px;text-align:center;top:687.32px;font-size:13.8px;font-weight:normal;color:#000;">Train</div>
<div class="t" style="left:1239.5px;width:400px;text-align:center;top:688.00px;font-size:13px;font-weight:normal;color:#000;">Shell</div>
<div class="t" style="left:1581.5px;width:400px;text-align:center;top:688.00px;font-size:13px;font-weight:normal;color:#000;">Shell</div>
<div class="t" style="left:726px;width:400px;text-align:center;top:727.57px;font-size:13.5px;font-weight:normal;color:#000;">Almond shell (3)</div>
<div class="t" style="left:897px;width:400px;text-align:center;top:727.32px;font-size:13.8px;font-weight:normal;color:#000;">Train</div>
<div class="t" style="left:1239.5px;width:400px;text-align:center;top:728.00px;font-size:13px;font-weight:normal;color:#000;">Shell</div>
<div class="t" style="left:1581.5px;width:400px;text-align:center;top:728.00px;font-size:13px;font-weight:normal;color:#000;">Shell</div>
<div class="t" style="left:726px;width:400px;text-align:center;top:767.57px;font-size:13.5px;font-weight:normal;color:#000;">Almond shell (4)</div>
<div class="t" style="left:897px;width:400px;text-align:center;top:767.32px;font-size:13.8px;font-weight:normal;color:#000;">Train</div>
<div class="t" style="left:1239.5px;width:400px;text-align:center;top:768.00px;font-size:13px;font-weight:normal;color:#000;">Shell</div>
<div class="t" style="left:1581.5px;width:400px;text-align:center;top:768.00px;font-size:13px;font-weight:normal;color:#000;">Shell</div>
<div class="t" style="left:726px;width:400px;text-align:center;top:807.57px;font-size:13.5px;font-weight:normal;color:#000;">Almond shell (5)</div>
<div class="t" style="left:897px;width:400px;text-align:center;top:807.32px;font-size:13.8px;font-weight:normal;color:#000;">Train</div>
<div class="t" style="left:1239.5px;width:400px;text-align:center;top:808.00px;font-size:13px;font-weight:normal;color:#000;">Shell</div>
<div class="t" style="left:1581.5px;width:400px;text-align:center;top:808.00px;font-size:13px;font-weight:normal;color:#000;">Shell</div>
<div class="t" style="left:726px;width:400px;text-align:center;top:847.57px;font-size:13.5px;font-weight:normal;color:#000;">Almond shell (6)</div>
<div class="t" style="left:897px;width:400px;text-align:center;top:847.32px;font-size:13.8px;font-weight:normal;color:#000;">Train</div>
<div class="t" style="left:1239.5px;width:400px;text-align:center;top:848.00px;font-size:13px;font-weight:normal;color:#000;">Shell</div>
<div class="t" style="left:1581.5px;width:400px;text-align:center;top:848.00px;font-size:13px;font-weight:normal;color:#000;">Shell</div>
<div class="t" style="left:726px;width:400px;text-align:center;top:887.57px;font-size:13.5px;font-weight:normal;color:#000;">Almond shell (7)</div>
<div class="t" style="left:897px;width:400px;text-align:center;top:887.32px;font-size:13.8px;font-weight:normal;color:#000;">Train</div>
<div class="t" style="left:1239.5px;width:400px;text-align:center;top:888.00px;font-size:13px;font-weight:normal;color:#000;">Shell</div>
<div class="t" style="left:1581.5px;width:400px;text-align:center;top:888.00px;font-size:13px;font-weight:normal;color:#000;">Shell</div>
<svg class="abs" style="left:0;top:0" width="1920" height="914"><rect x="1364.5" y="124.5" width="19" height="19" fill="#3ad13a" stroke="#000" stroke-width="1.3"/><rect x="1706.5" y="124.5" width="19" height="19" fill="#3ad13a" stroke="#000" stroke-width="1.3"/><defs><linearGradient id="ig0" x1="0" y1="1" x2="1" y2="0"><stop offset="0" stop-color="#eef0e8"/><stop offset="0.35" stop-color="#e2d6dc"/><stop offset="1" stop-color="#d6c2cc"/></linearGradient></defs><path d="M1273.0,115.0 C1280.2,112.9 1278.1,113.3 1282.0,116.0 C1285.9,118.7 1285.7,117.7 1286.0,124.0 C1286.3,130.3 1286.0,130.4 1283.0,137.0 C1280.0,143.6 1281.7,141.7 1276.0,146.0 C1270.3,150.3 1269.4,149.9 1264.0,151.5 C1258.6,153.1 1261.9,153.4 1258.0,151.2 C1254.1,148.9 1252.8,148.9 1251.0,144.0 C1249.2,139.1 1249.9,141.3 1252.0,135.0 C1254.1,128.7 1251.7,129.0 1258.0,123.0 C1264.3,117.0 1265.8,117.1 1273.0,115.0Z" fill="url(#ig0)" stroke="#3a3a3a" stroke-width="0.9" stroke-linejoin="round"/><path d="M1615.0,115.0 C1622.2,112.9 1620.1,113.3 1624.0,116.0 C1627.9,118.7 1627.7,117.7 1628.0,124.0 C1628.3,130.3 1628.0,130.4 1625.0,137.0 C1622.0,143.6 1623.7,141.7 1618.0,146.0 C1612.3,150.3 1611.4,149.9 1606.0,151.5 C1600.6,153.1 1603.9,153.4 1600.0,151.2 C1596.1,148.9 1594.8,148.9 1593.0,144.0 C1591.2,139.1 1591.9,141.3 1594.0,135.0 C1596.1,128.7 1593.7,129.0 1600.0,123.0 C1606.3,117.0 1607.8,117.1 1615.0,115.0Z" fill="#3bcf3b" stroke="#1060f0" stroke-width="0.6" stroke-linejoin="round"/><rect x="1364.5" y="164.5" width="19" height="19" fill="#3ad13a" stroke="#000" stroke-width="1.3"/><rect x="1706.5" y="164.5" width="19" height="19" fill="#3ad13a" stroke="#000" stroke-width="1.3"/><defs><linearGradient id="ig1" x1="0.3" y1="0" x2="0.6" y2="1"><stop offset="0" stop-color="#c9c6cf"/><stop offset="0.28" stop-color="#c4b8bc"/><stop offset="0.36" stop-color="#b27263"/><stop offset="1" stop-color="#a86458"/></linearGradient></defs><path d="M1253.8,159.5 C1260.1,155.7 1256.3,157.4 1267.8,156.0 C1279.3,154.6 1283.3,153.2 1292.2,154.9 C1301.1,156.6 1296.5,156.9 1297.5,161.8 C1298.5,166.7 1301.5,163.4 1295.7,171.1 C1289.9,178.8 1292.5,181.0 1278.2,187.4 C1263.9,193.8 1259.5,193.2 1248.0,192.5 C1236.5,191.8 1240.3,192.2 1239.9,185.1 C1239.5,178.0 1242.6,176.5 1246.8,168.8 C1251.0,161.1 1247.5,163.3 1253.8,159.5Z" fill="url(#ig1)" stroke="#3a3a3a" stroke-width="0.9" stroke-linejoin="round"/><path d="M1595.8,159.5 C1602.1,155.7 1598.3,157.4 1609.8,156.0 C1621.3,154.6 1625.3,153.2 1634.2,154.9 C1643.1,156.6 1638.5,156.9 1639.5,161.8 C1640.5,166.7 1643.5,163.4 1637.7,171.1 C1631.9,178.8 1634.5,181.0 1620.2,187.4 C1605.9,193.8 1601.5,193.2 1590.0,192.5 C1578.5,191.8 1582.3,192.2 1581.9,185.1 C1581.5,178.0 1584.6,176.5 1588.8,168.8 C1593.0,161.1 1589.5,163.3 1595.8,159.5Z" fill="#3bcf3b" stroke="#1060f0" stroke-width="0.6" stroke-linejoin="round"/><rect x="1364.5" y="204.5" width="19" height="19" fill="#3ad13a" stroke="#000" stroke-width="1.3"/><rect x="1706.5" y="204.5" width="19" height="19" fill="#3ad13a" stroke="#000" stroke-width="1.3"/><defs><linearGradient id="ig2" x1="1" y1="0" x2="0" y2="1"><stop offset="0" stop-color="#c6bcc2"/><stop offset="0.55" stop-color="#b8a8b0"/><stop offset="0.7" stop-color="#9c6e70"/><stop offset="1" stop-color="#8e6260"/></linearGradient></defs><path d="M1279.4,194.4 C1285.3,196.1 1282.3,191.6 1285.2,201.4 C1288.1,211.2 1290.6,217.8 1289.2,227.0 C1287.8,236.2 1284.9,233.5 1280.6,232.1 C1276.2,230.7 1278.9,225.9 1274.7,222.3 C1270.5,218.7 1272.9,220.0 1266.6,220.0 C1260.3,220.0 1259.4,223.7 1253.8,222.3 C1248.2,220.9 1248.7,220.2 1248.0,215.3 C1247.3,210.4 1246.3,211.9 1251.5,206.0 C1256.7,200.1 1257.0,199.1 1265.4,195.6 C1273.8,192.1 1273.5,192.7 1279.4,194.4Z" fill="url(#ig2)" stroke="#3a3a3a" stroke-width="0.9" stroke-linejoin="round"/><path d="M1621.4,194.4 C1627.3,196.1 1624.3,191.6 1627.2,201.4 C1630.1,211.2 1632.6,217.8 1631.2,227.0 C1629.8,236.2 1626.9,233.5 1622.6,232.1 C1618.2,230.7 1620.9,225.9 1616.7,222.3 C1612.5,218.7 1614.9,220.0 1608.6,220.0 C1602.3,220.0 1601.4,223.7 1595.8,222.3 C1590.2,220.9 1590.7,220.2 1590.0,215.3 C1589.3,210.4 1588.3,211.9 1593.5,206.0 C1598.7,200.1 1599.0,199.1 1607.4,195.6 C1615.8,192.1 1615.5,192.7 1621.4,194.4Z" fill="#3bcf3b" stroke="#1060f0" stroke-width="0.6" stroke-linejoin="round"/><rect x="1364.5" y="244.5" width="19" height="19" fill="#3ad13a" stroke="#000" stroke-width="1.3"/><rect x="1706.5" y="244.5" width="19" height="19" fill="#3ad13a" stroke="#000" stroke-width="1.3"/><defs><linearGradient id="ig3" x1="0" y1="0" x2="1" y2="1"><stop offset="0" stop-color="#c0586a"/><stop offset="0.45" stop-color="#b25a68"/><stop offset="0.55" stop-color="#c8b898"/><stop offset="0.62" stop-color="#a85868"/><stop offset="1" stop-color="#9a5060"/></linearGradient></defs><path d="M1274.7,235.1 C1278.9,239.3 1274.3,245.0 1277.1,250.2 C1279.9,255.4 1281.4,248.0 1284.0,252.5 C1286.6,257.0 1289.4,259.7 1285.9,265.3 C1282.4,270.9 1280.3,269.7 1272.4,271.1 C1264.5,272.5 1265.5,274.2 1259.6,270.0 C1253.7,265.8 1254.4,265.2 1252.7,257.2 C1251.0,249.2 1250.7,249.5 1253.8,243.2 C1256.9,236.9 1256.8,238.7 1263.1,236.3 C1269.4,233.9 1270.5,230.9 1274.7,235.1Z" fill="url(#ig3)" stroke="#3a3a3a" stroke-width="0.9" stroke-linejoin="round"/><path d="M1616.7,235.1 C1620.9,239.3 1616.3,245.0 1619.1,250.2 C1621.9,255.4 1623.4,248.0 1626.0,252.5 C1628.6,257.0 1631.4,259.7 1627.9,265.3 C1624.4,270.9 1622.3,269.7 1614.4,271.1 C1606.5,272.5 1607.5,274.2 1601.6,270.0 C1595.7,265.8 1596.4,265.2 1594.7,257.2 C1593.0,249.2 1592.7,249.5 1595.8,243.2 C1598.9,236.9 1598.8,238.7 1605.1,236.3 C1611.4,233.9 1612.5,230.9 1616.7,235.1Z" fill="#3bcf3b" stroke="#1060f0" stroke-width="0.6" stroke-linejoin="round"/><rect x="1364.5" y="284.5" width="19" height="19" fill="#3ad13a" stroke="#000" stroke-width="1.3"/><rect x="1706.5" y="284.5" width="19" height="19" fill="#3ad13a" stroke="#000" stroke-width="1.3"/><defs><linearGradient id="ig4" x1="0" y1="0" x2="1" y2="1"><stop offset="0" stop-color="#b8a8b0"/><stop offset="0.5" stop-color="#cbbcc3"/><stop offset="1" stop-color="#c0aab4"/></linearGradient></defs><path d="M1285.2,274.6 C1290.2,281.2 1287.3,286.2 1284.5,296.7 C1281.7,307.2 1281.6,304.8 1275.9,309.5 C1270.2,314.2 1272.0,313.2 1265.4,312.5 C1258.8,311.8 1258.3,313.3 1253.8,307.2 C1249.3,301.1 1248.9,300.8 1250.3,292.1 C1251.7,283.4 1253.2,283.4 1258.5,278.1 C1263.8,272.9 1259.8,275.7 1267.8,274.6 C1275.8,273.6 1280.2,268.0 1285.2,274.6Z" fill="url(#ig4)" stroke="#3a3a3a" stroke-width="0.9" stroke-linejoin="round"/><path d="M1627.2,274.6 C1632.2,281.2 1629.3,286.2 1626.5,296.7 C1623.7,307.2 1623.6,304.8 1617.9,309.5 C1612.2,314.2 1614.0,313.2 1607.4,312.5 C1600.8,311.8 1600.3,313.3 1595.8,307.2 C1591.3,301.1 1590.9,300.8 1592.3,292.1 C1593.7,283.4 1595.2,283.4 1600.5,278.1 C1605.8,272.9 1601.8,275.7 1609.8,274.6 C1617.8,273.6 1622.2,268.0 1627.2,274.6Z" fill="#3bcf3b" stroke="#1060f0" stroke-width="0.6" stroke-linejoin="round"/><rect x="1364.5" y="324.5" width="19" height="19" fill="#3ad13a" stroke="#000" stroke-width="1.3"/><rect x="1706.5" y="324.5" width="19" height="19" fill="#3ad13a" stroke="#000" stroke-width="1.3"/><defs><linearGradient id="ig5" x1="0" y1="0" x2="1" y2="1"><stop offset="0" stop-color="#d4bcc4"/><stop offset="0.6" stop-color="#c8a8b4"/><stop offset="1" stop-color="#d8d8c8"/></linearGradient></defs><path d="M1265.4,314.9 C1270.4,314.2 1270.1,311.5 1274.7,316.5 C1279.3,321.5 1279.5,323.2 1280.6,331.6 C1281.6,340.0 1280.7,338.1 1278.2,344.4 C1275.7,350.7 1277.3,352.5 1272.4,352.5 C1267.5,352.5 1266.9,351.4 1262.0,344.4 C1257.1,337.4 1257.3,337.0 1256.1,329.3 C1254.9,321.6 1255.2,323.1 1258.0,318.8 C1260.8,314.5 1260.4,315.6 1265.4,314.9Z" fill="url(#ig5)" stroke="#3a3a3a" stroke-width="0.9" stroke-linejoin="round"/><path d="M1607.4,314.9 C1612.4,314.2 1612.1,311.5 1616.7,316.5 C1621.3,321.5 1621.5,323.2 1622.6,331.6 C1623.6,340.0 1622.7,338.1 1620.2,344.4 C1617.7,350.7 1619.3,352.5 1614.4,352.5 C1609.5,352.5 1608.9,351.4 1604.0,344.4 C1599.1,337.4 1599.3,337.0 1598.1,329.3 C1596.9,321.6 1597.2,323.1 1600.0,318.8 C1602.8,314.5 1602.4,315.6 1607.4,314.9Z" fill="#3bcf3b" stroke="#1060f0" stroke-width="0.6" stroke-linejoin="round"/><rect x="1364.5" y="364.5" width="19" height="19" fill="#3ad13a" stroke="#000" stroke-width="1.3"/><rect x="1706.5" y="364.5" width="19" height="19" fill="#3ad13a" stroke="#000" stroke-width="1.3"/><defs><linearGradient id="ig6" x1="0" y1="0" x2="0" y2="1"><stop offset="0" stop-color="#7a4a40"/><stop offset="0.3" stop-color="#8a5a50"/><stop offset="0.5" stop-color="#d8d4c8"/><stop offset="1" stop-color="#d4dcc0"/></linearGradient></defs><path d="M1238.2,372.0 C1242.3,367.1 1244.8,364.9 1252.3,362.5 C1259.8,360.1 1257.0,363.9 1263.1,363.9 C1269.2,363.9 1266.1,364.5 1272.6,362.5 C1279.1,360.5 1279.1,359.5 1284.8,357.1 C1290.5,354.7 1288.3,352.0 1291.6,354.4 C1294.9,356.8 1293.3,359.5 1295.7,365.2 C1298.1,370.9 1302.2,367.6 1299.7,373.3 C1297.2,379.0 1298.5,378.7 1287.5,384.2 C1276.5,389.7 1275.3,390.3 1263.1,391.5 C1250.9,392.7 1254.1,392.1 1246.8,388.3 C1239.5,384.5 1241.3,383.7 1238.7,378.8 C1236.1,373.9 1234.1,376.9 1238.2,372.0Z" fill="url(#ig6)" stroke="#3a3a3a" stroke-width="0.9" stroke-linejoin="round"/><path d="M1580.2,372.0 C1584.3,367.1 1586.8,364.9 1594.3,362.5 C1601.8,360.1 1599.0,363.9 1605.1,363.9 C1611.2,363.9 1608.1,364.5 1614.6,362.5 C1621.1,360.5 1621.1,359.5 1626.8,357.1 C1632.5,354.7 1630.3,352.0 1633.6,354.4 C1636.9,356.8 1635.3,359.5 1637.7,365.2 C1640.1,370.9 1644.2,367.6 1641.7,373.3 C1639.2,379.0 1640.5,378.7 1629.5,384.2 C1618.5,389.7 1617.3,390.3 1605.1,391.5 C1592.9,392.7 1596.1,392.1 1588.8,388.3 C1581.5,384.5 1583.3,383.7 1580.7,378.8 C1578.1,373.9 1576.1,376.9 1580.2,372.0Z" fill="#3bcf3b" stroke="#1060f0" stroke-width="0.6" stroke-linejoin="round"/><rect x="1364.5" y="404.5" width="19" height="19" fill="#3ad13a" stroke="#000" stroke-width="1.3"/><rect x="1706.5" y="404.5" width="19" height="19" fill="#3ad13a" stroke="#000" stroke-width="1.3"/><defs><linearGradient id="ig7" x1="0" y1="0" x2="0" y2="1"><stop offset="0" stop-color="#dcd2da"/><stop offset="0.65" stop-color="#d8ccd4"/><stop offset="0.8" stop-color="#8c5656"/><stop offset="1" stop-color="#8a5050"/></linearGradient></defs><path d="M1268.5,395.0 C1274.2,395.8 1274.3,394.2 1279.4,399.1 C1284.5,404.0 1284.2,401.5 1285.4,411.3 C1286.6,421.1 1290.2,427.2 1283.5,431.7 C1276.8,436.2 1272.9,429.9 1263.1,426.2 C1253.3,422.5 1254.1,426.0 1250.9,419.5 C1247.7,413.0 1249.5,411.4 1252.3,404.5 C1255.1,397.6 1255.5,399.2 1260.4,396.4 C1265.3,393.5 1262.8,394.2 1268.5,395.0Z" fill="url(#ig7)" stroke="#3a3a3a" stroke-width="0.9" stroke-linejoin="round"/><path d="M1610.5,395.0 C1616.2,395.8 1616.3,394.2 1621.4,399.1 C1626.5,404.0 1626.2,401.5 1627.4,411.3 C1628.6,421.1 1632.2,427.2 1625.5,431.7 C1618.8,436.2 1614.9,429.9 1605.1,426.2 C1595.3,422.5 1596.1,426.0 1592.9,419.5 C1589.7,413.0 1591.5,411.4 1594.3,404.5 C1597.1,397.6 1597.5,399.2 1602.4,396.4 C1607.3,393.5 1604.8,394.2 1610.5,395.0Z" fill="#3bcf3b" stroke="#1060f0" stroke-width="0.6" stroke-linejoin="round"/><rect x="1364.5" y="444.5" width="19" height="19" fill="#3ad13a" stroke="#000" stroke-width="1.3"/><rect x="1706.5" y="444.5" width="19" height="19" fill="#3ad13a" stroke="#000" stroke-width="1.3"/><path d="M1253.6,434.4 C1261.8,434.4 1263.4,433.3 1274.0,439.8 C1284.6,446.3 1283.6,447.1 1288.9,456.1 C1294.2,465.1 1295.3,465.0 1291.6,469.7 C1287.9,474.4 1288.5,473.4 1276.7,471.8 C1264.9,470.2 1261.9,469.7 1252.3,464.2 C1242.7,458.7 1246.4,460.7 1244.7,453.4 C1243.0,446.1 1244.1,445.5 1246.8,439.8 C1249.5,434.1 1245.4,434.4 1253.6,434.4Z" fill="#e0d5dc" stroke="#3a3a3a" stroke-width="0.9" stroke-linejoin="round"/><path d="M1595.6,434.4 C1603.8,434.4 1605.4,433.3 1616.0,439.8 C1626.6,446.3 1625.6,447.1 1630.9,456.1 C1636.2,465.1 1637.3,465.0 1633.6,469.7 C1629.9,474.4 1630.5,473.4 1618.7,471.8 C1606.9,470.2 1603.9,469.7 1594.3,464.2 C1584.7,458.7 1588.4,460.7 1586.7,453.4 C1585.0,446.1 1586.1,445.5 1588.8,439.8 C1591.5,434.1 1587.4,434.4 1595.6,434.4Z" fill="#3bcf3b" stroke="#1060f0" stroke-width="0.6" stroke-linejoin="round"/><rect x="1364.5" y="484.5" width="19" height="19" fill="#3ad13a" stroke="#000" stroke-width="1.3"/><rect x="1706.5" y="484.5" width="19" height="19" fill="#3ad13a" stroke="#000" stroke-width="1.3"/><defs><linearGradient id="ig9" x1="0" y1="0" x2="1" y2="1"><stop offset="0" stop-color="#6e4040"/><stop offset="0.5" stop-color="#8a5050"/><stop offset="0.8" stop-color="#b07878"/><stop offset="1" stop-color="#7a4848"/></linearGradient></defs><path d="M1263.1,474.5 C1272.9,477.4 1280.1,480.9 1286.2,490.0 C1292.3,499.1 1292.9,498.4 1283.5,504.9 C1274.1,511.4 1265.0,514.9 1255.0,511.7 C1245.0,508.5 1250.5,503.5 1250.1,494.1 C1249.7,484.7 1249.7,486.4 1253.6,480.5 C1257.5,474.6 1253.3,471.6 1263.1,474.5Z" fill="url(#ig9)" stroke="#3a3a3a" stroke-width="0.9" stroke-linejoin="round"/><path d="M1605.1,474.5 C1614.9,477.4 1622.1,480.9 1628.2,490.0 C1634.3,499.1 1634.9,498.4 1625.5,504.9 C1616.1,511.4 1607.0,514.9 1597.0,511.7 C1587.0,508.5 1592.5,503.5 1592.1,494.1 C1591.7,484.7 1591.7,486.4 1595.6,480.5 C1599.5,474.6 1595.3,471.6 1605.1,474.5Z" fill="#3bcf3b" stroke="#1060f0" stroke-width="0.6" stroke-linejoin="round"/><rect x="1364.5" y="524.5" width="19" height="19" fill="#3ad13a" stroke="#000" stroke-width="1.3"/><rect x="1706.5" y="524.5" width="19" height="19" fill="#3ad13a" stroke="#000" stroke-width="1.3"/><defs><linearGradient id="ig10" x1="1" y1="0" x2="0" y2="1"><stop offset="0" stop-color="#c4d4a8"/><stop offset="0.6" stop-color="#d8dcc8"/><stop offset="1" stop-color="#e0d8e0"/></linearGradient></defs><path d="M1272.6,514.4 C1276.7,515.2 1276.7,514.9 1279.4,522.6 C1282.1,530.3 1283.2,532.9 1281.6,540.2 C1280.0,547.5 1279.5,543.3 1274.0,547.0 C1268.5,550.7 1268.6,553.6 1263.1,552.4 C1257.5,551.2 1257.1,549.4 1255.5,542.9 C1253.9,536.4 1254.6,537.6 1257.7,530.7 C1260.8,523.8 1261.3,524.7 1265.8,519.8 C1270.3,514.9 1268.5,513.6 1272.6,514.4Z" fill="url(#ig10)" stroke="#3a3a3a" stroke-width="0.9" stroke-linejoin="round"/><path d="M1614.6,514.4 C1618.7,515.2 1618.7,514.9 1621.4,522.6 C1624.1,530.3 1625.2,532.9 1623.6,540.2 C1622.0,547.5 1621.5,543.3 1616.0,547.0 C1610.5,550.7 1610.6,553.6 1605.1,552.4 C1599.5,551.2 1599.1,549.4 1597.5,542.9 C1595.9,536.4 1596.6,537.6 1599.7,530.7 C1602.8,523.8 1603.3,524.7 1607.8,519.8 C1612.3,514.9 1610.5,513.6 1614.6,514.4Z" fill="#3bcf3b" stroke="#1060f0" stroke-width="0.6" stroke-linejoin="round"/><rect x="1364.5" y="564.5" width="19" height="19" fill="#3ad13a" stroke="#000" stroke-width="1.3"/><rect x="1706.5" y="564.5" width="19" height="19" fill="#3ad13a" stroke="#000" stroke-width="1.3"/><path d="M1276.7,554.3 C1285.7,555.8 1283.6,553.9 1286.2,561.9 C1288.8,569.9 1289.9,572.0 1285.4,580.9 C1280.9,589.8 1279.5,588.5 1271.2,591.7 C1262.9,594.9 1264.0,598.2 1257.7,591.7 C1251.4,585.2 1250.5,580.4 1250.1,570.0 C1249.7,559.6 1248.3,561.7 1256.3,557.0 C1264.3,552.3 1267.7,552.8 1276.7,554.3Z" fill="#dcd9e0" stroke="#3a3a3a" stroke-width="0.9" stroke-linejoin="round"/><path d="M1618.7,554.3 C1627.7,555.8 1625.6,553.9 1628.2,561.9 C1630.8,569.9 1631.9,572.0 1627.4,580.9 C1622.9,589.8 1621.5,588.5 1613.2,591.7 C1604.9,594.9 1606.0,598.2 1599.7,591.7 C1593.4,585.2 1592.5,580.4 1592.1,570.0 C1591.7,559.6 1590.3,561.7 1598.3,557.0 C1606.3,552.3 1609.7,552.8 1618.7,554.3Z" fill="#3bcf3b" stroke="#1060f0" stroke-width="0.6" stroke-linejoin="round"/><rect x="1364.5" y="604.5" width="19" height="19" fill="#3ad13a" stroke="#000" stroke-width="1.3"/><rect x="1706.5" y="604.5" width="19" height="19" fill="#3ad13a" stroke="#000" stroke-width="1.3"/><path d="M1245.5,594.5 C1250.4,592.9 1249.6,594.8 1259.0,597.2 C1268.4,599.6 1267.3,599.4 1276.7,602.6 C1286.1,605.8 1285.5,602.3 1290.2,608.0 C1294.9,613.7 1294.8,614.7 1292.4,621.6 C1290.0,628.5 1291.7,628.7 1282.1,631.1 C1272.5,633.5 1271.4,634.2 1260.4,629.7 C1249.4,625.2 1250.8,624.3 1245.5,616.2 C1240.2,608.1 1242.8,609.1 1242.8,602.6 C1242.8,596.1 1240.6,596.1 1245.5,594.5Z" fill="#e2dfe0" stroke="#3a3a3a" stroke-width="0.9" stroke-linejoin="round"/><path d="M1587.5,594.5 C1592.4,592.9 1591.6,594.8 1601.0,597.2 C1610.4,599.6 1609.3,599.4 1618.7,602.6 C1628.1,605.8 1627.5,602.3 1632.2,608.0 C1636.9,613.7 1636.8,614.7 1634.4,621.6 C1632.0,628.5 1633.7,628.7 1624.1,631.1 C1614.5,633.5 1613.4,634.2 1602.4,629.7 C1591.4,625.2 1592.8,624.3 1587.5,616.2 C1582.2,608.1 1584.8,609.1 1584.8,602.6 C1584.8,596.1 1582.6,596.1 1587.5,594.5Z" fill="#3bcf3b" stroke="#1060f0" stroke-width="0.6" stroke-linejoin="round"/><rect x="1364.5" y="644.5" width="19" height="19" fill="#0a6cf2" stroke="#000" stroke-width="1.3"/><rect x="1706.5" y="644.5" width="19" height="19" fill="#0a6cf2" stroke="#000" stroke-width="1.3"/><path d="M1242.8,638.4 C1249.3,634.7 1252.1,633.2 1263.1,634.4 C1274.1,635.6 1270.4,637.6 1279.4,642.5 C1288.4,647.4 1288.5,646.1 1293.0,650.6 C1297.5,655.1 1299.2,654.1 1294.3,657.4 C1289.4,660.7 1282.0,657.0 1276.7,661.5 C1271.4,666.0 1280.8,669.4 1276.7,672.3 C1272.6,675.1 1271.6,674.7 1263.1,671.0 C1254.5,667.3 1254.7,667.4 1248.2,660.1 C1241.7,652.8 1243.0,653.1 1241.4,646.6 C1239.8,640.1 1236.3,642.1 1242.8,638.4Z" fill="#d0d8bc" stroke="#3a3a3a" stroke-width="0.9" stroke-linejoin="round"/><path d="M1584.8,638.4 C1591.3,634.7 1594.1,633.2 1605.1,634.4 C1616.1,635.6 1612.4,637.6 1621.4,642.5 C1630.4,647.4 1630.5,646.1 1635.0,650.6 C1639.5,655.1 1641.2,654.1 1636.3,657.4 C1631.4,660.7 1624.0,657.0 1618.7,661.5 C1613.4,666.0 1622.8,669.4 1618.7,672.3 C1614.6,675.1 1613.6,674.7 1605.1,671.0 C1596.5,667.3 1596.7,667.4 1590.2,660.1 C1583.7,652.8 1585.0,653.1 1583.4,646.6 C1581.8,640.1 1578.3,642.1 1584.8,638.4Z" fill="#0f6ef2" stroke="#e01010" stroke-width="0.6" stroke-linejoin="round"/><rect x="1364.5" y="684.5" width="19" height="19" fill="#0a6cf2" stroke="#000" stroke-width="1.3"/><rect x="1706.5" y="684.5" width="19" height="19" fill="#0a6cf2" stroke="#000" stroke-width="1.3"/><path d="M1268.5,674.2 C1276.2,674.4 1277.4,675.4 1282.1,680.5 C1286.8,685.6 1285.9,683.2 1284.3,691.3 C1282.7,699.4 1282.6,701.3 1276.7,707.6 C1270.8,713.9 1271.0,713.0 1264.5,712.2 C1258.0,711.4 1258.8,711.2 1255.0,704.9 C1251.2,698.6 1251.3,698.9 1251.7,691.3 C1252.1,683.7 1251.3,684.8 1256.3,679.7 C1261.3,674.6 1260.8,674.0 1268.5,674.2Z" fill="#d8dccc" stroke="#3a3a3a" stroke-width="0.9" stroke-linejoin="round"/><path d="M1610.5,674.2 C1618.2,674.4 1619.4,675.4 1624.1,680.5 C1628.8,685.6 1627.9,683.2 1626.3,691.3 C1624.7,699.4 1624.6,701.3 1618.7,707.6 C1612.8,713.9 1613.0,713.0 1606.5,712.2 C1600.0,711.4 1600.8,711.2 1597.0,704.9 C1593.2,698.6 1593.3,698.9 1593.7,691.3 C1594.1,683.7 1593.3,684.8 1598.3,679.7 C1603.3,674.6 1602.8,674.0 1610.5,674.2Z" fill="#0f6ef2" stroke="#e01010" stroke-width="0.6" stroke-linejoin="round"/><rect x="1364.5" y="724.5" width="19" height="19" fill="#0a6cf2" stroke="#000" stroke-width="1.3"/><rect x="1706.5" y="724.5" width="19" height="19" fill="#0a6cf2" stroke="#000" stroke-width="1.3"/><path d="M1276.7,714.4 C1283.6,718.1 1282.2,722.2 1284.8,733.4 C1287.4,744.6 1289.5,746.9 1285.4,751.8 C1281.3,756.7 1280.3,753.2 1271.2,749.7 C1262.1,746.2 1261.5,745.1 1255.0,740.2 C1248.5,735.3 1247.5,739.1 1249.5,733.4 C1251.5,727.7 1253.6,726.9 1261.8,721.2 C1270.0,715.5 1269.8,710.7 1276.7,714.4Z" fill="#ccd0b4" stroke="#3a3a3a" stroke-width="0.9" stroke-linejoin="round"/><path d="M1618.7,714.4 C1625.6,718.1 1624.2,722.2 1626.8,733.4 C1629.4,744.6 1631.5,746.9 1627.4,751.8 C1623.3,756.7 1622.3,753.2 1613.2,749.7 C1604.1,746.2 1603.5,745.1 1597.0,740.2 C1590.5,735.3 1589.5,739.1 1591.5,733.4 C1593.5,727.7 1595.6,726.9 1603.8,721.2 C1612.0,715.5 1611.8,710.7 1618.7,714.4Z" fill="#0f6ef2" stroke="#e01010" stroke-width="0.6" stroke-linejoin="round"/><rect x="1364.5" y="764.5" width="19" height="19" fill="#0a6cf2" stroke="#000" stroke-width="1.3"/><rect x="1706.5" y="764.5" width="19" height="19" fill="#0a6cf2" stroke="#000" stroke-width="1.3"/><path d="M1267.2,754.3 C1275.8,754.3 1276.8,754.9 1283.5,759.2 C1290.2,763.5 1289.3,761.7 1289.7,768.6 C1290.1,775.5 1291.5,775.3 1284.8,782.2 C1278.0,789.1 1277.8,789.7 1267.2,791.7 C1256.6,793.7 1255.6,794.3 1249.5,789.0 C1243.4,783.7 1245.1,783.0 1246.8,774.1 C1248.5,765.2 1248.9,765.1 1255.0,759.2 C1261.1,753.3 1258.7,754.3 1267.2,754.3Z" fill="#c6cdab" stroke="#3a3a3a" stroke-width="0.9" stroke-linejoin="round"/><path d="M1609.2,754.3 C1617.8,754.3 1618.8,754.9 1625.5,759.2 C1632.2,763.5 1631.3,761.7 1631.7,768.6 C1632.1,775.5 1633.5,775.3 1626.8,782.2 C1620.0,789.1 1619.8,789.7 1609.2,791.7 C1598.6,793.7 1597.6,794.3 1591.5,789.0 C1585.4,783.7 1587.1,783.0 1588.8,774.1 C1590.5,765.2 1590.9,765.1 1597.0,759.2 C1603.1,753.3 1600.7,754.3 1609.2,754.3Z" fill="#0f6ef2" stroke="#e01010" stroke-width="0.6" stroke-linejoin="round"/><rect x="1364.5" y="804.5" width="19" height="19" fill="#0a6cf2" stroke="#000" stroke-width="1.3"/><rect x="1706.5" y="804.5" width="19" height="19" fill="#0a6cf2" stroke="#000" stroke-width="1.3"/><path d="M1264.5,795.0 C1272.2,795.4 1272.1,794.3 1279.4,799.8 C1286.7,805.3 1287.4,806.0 1288.9,813.4 C1290.4,820.8 1290.8,818.8 1284.3,824.3 C1277.8,829.8 1276.4,830.4 1267.2,831.6 C1258.0,832.8 1258.5,835.0 1253.6,828.3 C1248.7,821.6 1252.8,816.4 1250.9,809.3 C1249.0,802.2 1246.6,807.7 1247.4,804.5 C1248.2,801.3 1248.5,801.4 1253.6,798.5 C1258.7,795.6 1256.8,794.6 1264.5,795.0Z" fill="#d4d8c8" stroke="#3a3a3a" stroke-width="0.9" stroke-linejoin="round"/><path d="M1606.5,795.0 C1614.2,795.4 1614.1,794.3 1621.4,799.8 C1628.7,805.3 1629.4,806.0 1630.9,813.4 C1632.4,820.8 1632.8,818.8 1626.3,824.3 C1619.8,829.8 1618.4,830.4 1609.2,831.6 C1600.0,832.8 1600.5,835.0 1595.6,828.3 C1590.7,821.6 1594.8,816.4 1592.9,809.3 C1591.0,802.2 1588.6,807.7 1589.4,804.5 C1590.2,801.3 1590.5,801.4 1595.6,798.5 C1600.7,795.6 1598.8,794.6 1606.5,795.0Z" fill="#0f6ef2" stroke="#e01010" stroke-width="0.6" stroke-linejoin="round"/><rect x="1364.5" y="844.5" width="19" height="19" fill="#0a6cf2" stroke="#000" stroke-width="1.3"/><rect x="1706.5" y="844.5" width="19" height="19" fill="#0a6cf2" stroke="#000" stroke-width="1.3"/><path d="M1269.1,834.3 C1273.6,834.7 1273.6,836.1 1276.7,843.3 C1279.8,850.5 1280.2,849.7 1279.4,858.2 C1278.6,866.7 1278.9,867.7 1274.0,871.7 C1269.1,875.8 1267.8,876.6 1263.1,871.7 C1258.4,866.8 1258.6,864.4 1258.2,855.5 C1257.8,846.6 1258.5,848.3 1261.8,841.9 C1265.1,835.5 1264.6,833.9 1269.1,834.3Z" fill="#d0d6bc" stroke="#3a3a3a" stroke-width="0.9" stroke-linejoin="round"/><path d="M1611.1,834.3 C1615.6,834.7 1615.6,836.1 1618.7,843.3 C1621.8,850.5 1622.2,849.7 1621.4,858.2 C1620.6,866.7 1620.9,867.7 1616.0,871.7 C1611.1,875.8 1609.8,876.6 1605.1,871.7 C1600.4,866.8 1600.6,864.4 1600.2,855.5 C1599.8,846.6 1600.5,848.3 1603.8,841.9 C1607.1,835.5 1606.6,833.9 1611.1,834.3Z" fill="#0f6ef2" stroke="#e01010" stroke-width="0.6" stroke-linejoin="round"/><rect x="1364.5" y="884.5" width="19" height="19" fill="#0a6cf2" stroke="#000" stroke-width="1.3"/><rect x="1706.5" y="884.5" width="19" height="19" fill="#0a6cf2" stroke="#000" stroke-width="1.3"/><path d="M1264.5,874.5 C1264.5,874.5 1276.7,878.5 1276.7,878.5 C1276.7,878.5 1293.0,886.7 1293.0,886.7 C1293.0,886.7 1310.6,893.4 1310.6,893.4 C1310.6,893.4 1307.9,901.6 1307.9,901.6 C1307.9,901.6 1252.3,912.4 1252.3,912.4 C1252.3,912.4 1226.5,912.4 1226.5,912.4 C1226.5,912.4 1226.5,901.6 1226.5,901.6 C1226.5,901.6 1244.1,894.8 1244.1,894.8 C1244.1,894.8 1250.9,879.9 1250.9,879.9 C1250.9,879.9 1264.5,874.5 1264.5,874.5Z" fill="#c8ccb4" stroke="#3a3a3a" stroke-width="0.9" stroke-linejoin="round"/><path d="M1606.5,874.5 C1606.5,874.5 1618.7,878.5 1618.7,878.5 C1618.7,878.5 1635.0,886.7 1635.0,886.7 C1635.0,886.7 1652.6,893.4 1652.6,893.4 C1652.6,893.4 1649.9,901.6 1649.9,901.6 C1649.9,901.6 1594.3,912.4 1594.3,912.4 C1594.3,912.4 1568.5,912.4 1568.5,912.4 C1568.5,912.4 1568.5,901.6 1568.5,901.6 C1568.5,901.6 1586.1,894.8 1586.1,894.8 C1586.1,894.8 1592.9,879.9 1592.9,879.9 C1592.9,879.9 1606.5,874.5 1606.5,874.5Z" fill="#0f6ef2" stroke="#e01010" stroke-width="0.6" stroke-linejoin="round"/><line x1="1615.6" y1="235" x2="1615.6" y2="271" stroke="#1a6ff0" stroke-width="1"/><line x1="1595.1" y1="363" x2="1595.1" y2="390" stroke="#1a6ff0" stroke-width="1"/><path d="M1614.6,514.5 L1621.4,523 L1623.6,539 L1618,543 L1608,537 L1601,532 L1603,524 Z" fill="#1070f0"/><line x1="1605.5" y1="533" x2="1605.5" y2="551" stroke="#1070f0" stroke-width="1"/></svg>
<div class="abs" style="left:1867px;top:114px;width:17px;height:800px;background:#eeeeee;"></div>
<div class="abs" style="left:1867px;top:130px;width:16px;height:119px;background:#979797;"></div>
<svg class="abs" style="left:1867px;top:114px" width="17" height="799"><polygon points="3.8,10 7.5,6 11.2,10" fill="#6a6a6a"/><polygon points="3.8,790.5 7.5,794.5 11.2,790.5" fill="#6a6a6a"/></svg>
<div class="abs" style="left:840px;top:914px;width:1045px;height:1px;background:#7d8490;"></div>
<div class="abs" style="left:60px;top:967px;width:425px;height:65px;background:linear-gradient(#c8c8c8 0px,#dcdcdc 22px,#fbfbfb 65px);"></div>
<div class="abs" style="left:500px;top:967px;width:1420px;height:65px;background:linear-gradient(#c8c8c8 0px,#dcdcdc 22px,#fbfbfb 65px);"></div>
<svg class="abs" style="left:60px;top:967px" width="425" height="65">
<path d="M14.6 30.3 L14.6 17.8 Q14.6 16.8 15.6 16.8 L21.8 16.8 L24.2 18.8 L32.3 18.8 Q33.3 18.8 33.3 19.8 L33.3 30.3 Q33.3 31.3 32.3 31.3 L15.6 31.3 Q14.6 31.3 14.6 30.3 Z" fill="none" stroke="#000" stroke-width="1.9" stroke-linejoin="round"/>
<path d="M27.1 22 L27.1 28 M24.1 25 L30.1 25" stroke="#000" stroke-width="1.9"/>
<path d="M62.9 18.4 L62.9 31.8 L80.4 31.8" fill="none" stroke="#000" stroke-width="1.9"/>
<path d="M66.7 27 L66.7 15.7 Q66.7 14.7 67.7 14.7 L72.4 14.7 L74.6 16.8 L82.3 16.8 Q83.3 16.8 83.3 17.8 L83.3 27 Q83.3 28 82.3 28 L67.7 28 Q66.7 28 66.7 27 Z" fill="none" stroke="#000" stroke-width="1.9" stroke-linejoin="round"/>
<path d="M124.2 16.8 L139.6 16.8 M128.3 15.5 L135 15.5" stroke="#000" stroke-width="1.9"/>
<path d="M125.6 17 L125.6 31 Q125.6 32.2 126.8 32.2 L137.6 32.2 Q138.8 32.2 138.8 31 L138.8 17" fill="none" stroke="#000" stroke-width="1.9"/>
<path d="M129.8 20.5 L129.8 28.4 M133.9 20.5 L133.9 28.4" stroke="#000" stroke-width="1.9"/>
<path d="M381.2 30.5 L381.2 17.6 Q381.2 16.6 382.2 16.6 L387.6 16.6 L389.6 18.6 L398.6 18.6 L399 19.5" fill="none" stroke="#000" stroke-width="1.9" stroke-linejoin="round"/>
<path d="M381.2 30.5 Q381.5 31.4 382.4 31.4 L397 31.4 Q398 31.4 398.3 30.5 L400.6 22 L385 22 L382.5 30" fill="none" stroke="#000" stroke-width="1.9" stroke-linejoin="round"/>
</svg>
<div class="t" style="left:-116px;width:400px;text-align:center;top:1006.12px;font-size:12.5px;font-weight:normal;color:#000;">Add</div>
<div class="t" style="left:-67.30000000000001px;width:400px;text-align:center;top:1006.29px;font-size:12.3px;font-weight:normal;color:#000;">Duplicate</div>
<div class="t" style="left:-8.199999999999989px;width:400px;text-align:center;top:1006.80px;font-size:11.7px;font-weight:normal;color:#000;">Remove</div>
<div class="t" style="left:249.5px;width:400px;text-align:center;top:1005.86px;font-size:12.8px;font-weight:normal;color:#000;">Open</div>
<svg class="abs" style="left:500px;top:967px" width="1420" height="65">
<path d="M58.8 19 L58.8 16.3 Q58.8 15.1 60 15.1 L74.4 15.1 Q75.6 15.1 75.6 16.3 L75.6 31.4 Q75.6 32.6 74.4 32.6 L60 32.6 Q58.8 32.6 58.8 31.4 L58.8 28.5" fill="none" stroke="#000" stroke-width="1.9"/>
<rect x="58.8" y="15.1" width="16.8" height="2.6" fill="#000"/>
<path d="M58.3 24.7 L70 24.7 M66.2 20.9 L70 24.7 L66.2 28.5" fill="none" stroke="#000" stroke-width="1.9"/>
<rect x="134.1" y="12" width="1" height="41" fill="#8a8a8a"/>
<path d="M207.3 23.5 L207.3 16.3 Q207.3 15.1 206.1 15.1 L192 15.1 Q190.8 15.1 190.8 16.3 L190.8 31.4 Q190.8 32.6 192 32.6 L202 32.6" fill="none" stroke="#000" stroke-width="1.9"/>
<path d="M198.9 18.7 L198.9 28.5 M194 23.6 L203.8 23.6" stroke="#000" stroke-width="1.9"/>
<path d="M203.5 30.5 L209 30.5 M206.6 28 L209.1 30.5 L206.6 33" fill="none" stroke="#000" stroke-width="1.7"/>
<path d="M313 27.9 L302.9 27.9 L302.9 19.9 L319.8 19.9 L319.8 23.5" fill="none" stroke="#000" stroke-width="1.9"/>
<path d="M318.8 24 L318.8 31.5 M315 27.8 L322.6 27.8" stroke="#000" stroke-width="1.9"/>
<rect x="372.1" y="12" width="1" height="41" fill="#8a8a8a"/>
<path d="M424.7 33 A8.6 8.6 0 0 1 418.5 19.5" fill="none" stroke="#000" stroke-width="2.1"/>
<path d="M425 14.7 A8.9 8.9 0 0 1 432.5 28.5" fill="none" stroke="#000" stroke-width="2.1"/>
<path d="M417 14.6 L422.6 14.6 L422.6 20.2" fill="none" stroke="#000" stroke-width="2.2"/>
<path d="M429.3 32.4 L434.9 32.4 L434.9 26.8" fill="none" stroke="#000" stroke-width="2.2"/>
<path d="M421 23.3 L424.7 27 L430.9 20.8" fill="none" stroke="#000" stroke-width="1.9"/>
</svg>
<div class="t" style="left:366.79999999999995px;width:400px;text-align:center;top:1006.50px;font-size:12.4px;font-weight:normal;color:#000;">Go to measurement</div>
<div class="t" style="left:499.5px;width:400px;text-align:center;top:1006.42px;font-size:12.5px;font-weight:normal;color:#000;">Add Sample model</div>
<div class="t" style="left:610.9px;width:400px;text-align:center;top:1006.50px;font-size:12.4px;font-weight:normal;color:#000;">Add Variable or Id</div>
<div class="t" style="left:726.4px;width:400px;text-align:center;top:1007.01px;font-size:11.8px;font-weight:normal;color:#000;">Apply Changes</div>
<div class="abs" style="left:1808px;top:974px;width:100px;height:50px;background:#9e76a3;border-radius:6px"></div>
<svg class="abs" style="left:1808px;top:974px" width="100" height="50">
<rect x="40.3" y="9.2" width="14.4" height="14.6" rx="2" fill="none" stroke="#fff" stroke-width="2"/>
<polygon points="55,14.5 59,11 59,22 55,18.5" fill="#fff"/>
</svg>
<div class="t" style="left:1657.6px;width:400px;text-align:center;top:1005.84px;font-size:12px;font-weight:normal;color:#f4eef5;">Recorder</div>
<div class="t" style="left:840px;top:933.45px;font-size:14px;font-weight:normal;color:#111;">Segmentation</div>
<div class="abs" style="left:935px;top:927.5px;width:200px;height:25.5px;background:#fff;border:1px solid #8a8a8a"></div>
<div class="t" style="left:941.2px;top:934.41px;font-size:13.1px;font-weight:normal;color:#000;">Sample - Nuts_Classification</div>
<svg class="abs" style="left:1100px;top:920px" width="40" height="40"><polygon points="16,15 28,15 22,24" fill="#000"/></svg>
<svg class="abs" style="left:1775px;top:920px" width="110" height="40">
<path d="M20 13 L20 27.5 M16.3 15.2 L20 11.5 L23.7 15.2 M16.3 25.3 L20 29 L23.7 25.3" fill="none" stroke="#000" stroke-width="2"/>
<path d="M46 20 L62 20 M48.9 16.5 L45.4 20 L48.9 23.5 M59.1 16.5 L62.6 20 L59.1 23.5" fill="none" stroke="#000" stroke-width="2"/>
<path d="M80 11.3 L80 28.7 M96 11.3 L96 28.7" stroke="#000" stroke-width="2"/>
<rect x="83" y="19" width="2" height="2" fill="#000"/><rect x="87" y="19" width="2" height="2" fill="#000"/><rect x="91" y="19" width="2" height="2" fill="#000"/>
</svg>
</body></html>
